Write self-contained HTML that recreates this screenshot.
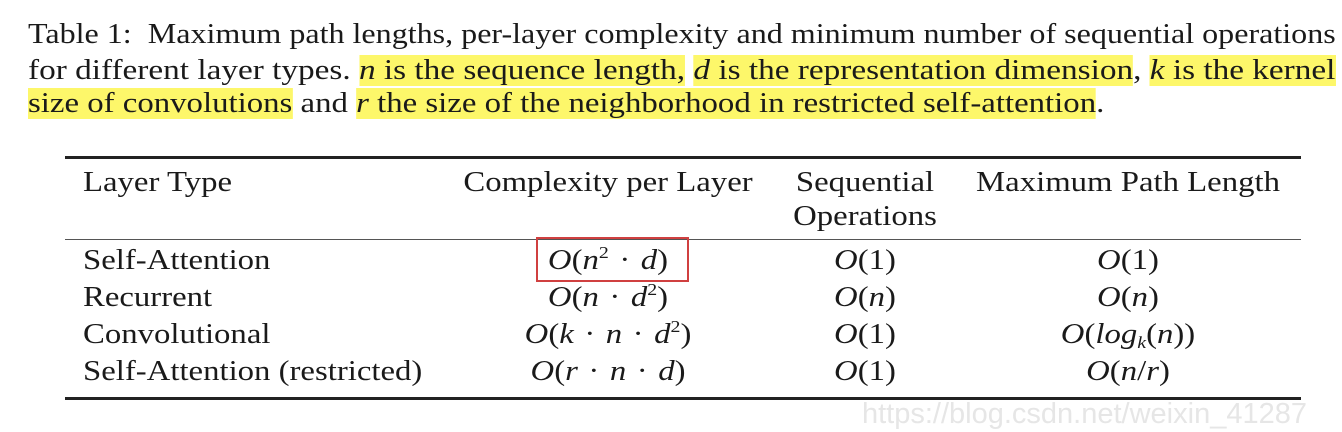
<!DOCTYPE html>
<html><head><meta charset="utf-8">
<style>
body{margin:0;width:1342px;height:432px;background:#fff;overflow:hidden;position:relative;font-family:"Liberation Serif",serif;color:#1a1a1a}
.l{position:absolute;left:28px;font-size:28px;white-space:nowrap;line-height:32px;transform:scaleX(1.145);transform-origin:left center}
.h{background:#fdf76a}
i{font-style:italic}
.rule{position:absolute;left:65px;width:1236px;background:#222}
.c{position:absolute;font-size:28px;white-space:nowrap;line-height:34px;transform:scaleX(1.17);transform-origin:left center}
.ctr{transform:translateX(-50%) scaleX(1.17);transform-origin:center center}
.m{word-spacing:2px}
sup{font-size:17px;line-height:0;vertical-align:11px}
sub{font-size:17px;line-height:0;vertical-align:-5px}
</style></head><body>
<div class="l" style="top:19px">Table 1:&nbsp; Maximum path lengths, per-layer complexity and minimum number of sequential operations</div>
<div class="l" style="top:55px;transform:scaleX(1.188)">for different layer types. <span class="h"><i>n</i> is the sequence length,</span> <span class="h"><i>d</i> is the representation dimension</span>, <span class="h"><i>k</i> is the kernel</span></div>
<div class="l" style="top:88px;transform:scaleX(1.172)"><span class="h">size of convolutions</span> and <span class="h"><i>r</i> the size of the neighborhood in restricted self-attention</span>.</div>

<div class="rule" style="top:156px;height:3px"></div>
<div class="rule" style="top:239px;height:1px;background:#555"></div>
<div class="rule" style="top:397px;height:3px"></div>

<div class="c" style="left:83px;top:166px">Layer Type</div>
<div class="c ctr" style="left:608px;top:166px">Complexity per Layer</div>
<div class="c ctr" style="left:865px;top:166px">Sequential</div>
<div class="c ctr" style="left:865px;top:200px">Operations</div>
<div class="c ctr" style="left:1128px;top:166px">Maximum Path Length</div>

<div class="c" style="left:83px;top:244px">Self-Attention</div>
<div class="c" style="left:83px;top:281px">Recurrent</div>
<div class="c" style="left:83px;top:318px">Convolutional</div>
<div class="c" style="left:83px;top:355px">Self-Attention (restricted)</div>

<div class="c ctr m" style="left:608px;top:244px"><i>O</i>(<i>n</i><sup>2</sup> · <i>d</i>)</div>
<div class="c ctr m" style="left:608px;top:281px"><i>O</i>(<i>n</i> · <i>d</i><sup>2</sup>)</div>
<div class="c ctr m" style="left:608px;top:318px"><i>O</i>(<i>k</i> · <i>n</i> · <i>d</i><sup>2</sup>)</div>
<div class="c ctr m" style="left:608px;top:355px"><i>O</i>(<i>r</i> · <i>n</i> · <i>d</i>)</div>

<div class="c ctr" style="left:865px;top:244px"><i>O</i>(1)</div>
<div class="c ctr" style="left:865px;top:281px"><i>O</i>(<i>n</i>)</div>
<div class="c ctr" style="left:865px;top:318px"><i>O</i>(1)</div>
<div class="c ctr" style="left:865px;top:355px"><i>O</i>(1)</div>

<div class="c ctr" style="left:1128px;top:244px"><i>O</i>(1)</div>
<div class="c ctr" style="left:1128px;top:281px"><i>O</i>(<i>n</i>)</div>
<div class="c ctr" style="left:1128px;top:318px"><i>O</i>(<i>log<sub>k</sub></i>(<i>n</i>))</div>
<div class="c ctr" style="left:1128px;top:355px"><i>O</i>(<i>n</i>/<i>r</i>)</div>

<div style="position:absolute;left:536px;top:237px;width:149px;height:41px;border:2px solid #d04040"></div>

<div style="position:absolute;left:862px;top:398px;font-family:'Liberation Sans',sans-serif;font-size:29px;color:#e6e6e6;white-space:nowrap">https://blog.csdn.net/weixin_41287</div>
</body></html>
